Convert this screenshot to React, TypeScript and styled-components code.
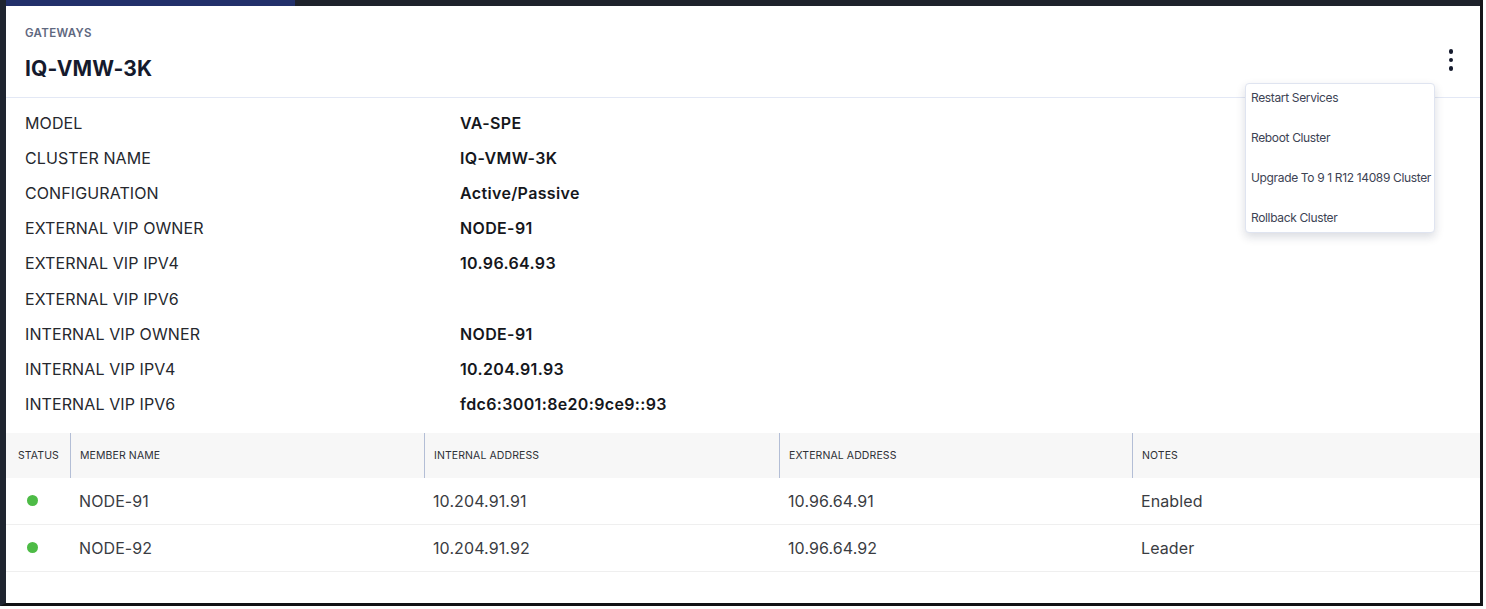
import React from 'react';
import styled, { createGlobalStyle } from 'styled-components';

const GlobalStyle = createGlobalStyle`
  html, body {
    margin: 0;
    padding: 0;
    background: #ffffff;
  }

  body {
    font-family: Inter, "Noto Sans", "Liberation Sans", sans-serif;
    -webkit-font-smoothing: antialiased;
  }
`;

const Frame = styled.div`
  border-bottom: 3px solid #111214;
  border-left: 6px solid #1f2530;
  border-right: 3px solid #17181b;
  box-sizing: border-box;
  display: flex;
  flex-direction: column;
  height: 606px;
  width: 1483px;
`;

const TopBar = styled.div`
  background: #1e222b;
  display: flex;
  flex: none;
  height: 6px;
`;

const TopBarActive = styled.div`
  background: #22306a;
  width: 289px;
`;

const Panel = styled.div`
  background: #fff;
  display: flex;
  flex: 1;
  flex-direction: column;
  position: relative;
`;

const Header = styled.div`
  align-items: flex-start;
  border-bottom: 1px solid #e3e8f5;
  display: flex;
  justify-content: space-between;
  padding: 20px 19px 14px 19px;
`;

const Eyebrow = styled.div`
  color: #5f6880;
  font-size: 11.5px;
  font-weight: 600;
  letter-spacing: 0.3px;
  line-height: 14px;
`;

const Title = styled.h1`
  color: #151a2d;
  font-size: 21px;
  font-weight: 700;
  letter-spacing: 0.2px;
  line-height: 28px;
  margin: 15px 0 0;
`;

const Kebab = styled.button`
  align-items: center;
  background: none;
  border: none;
  cursor: pointer;
  display: flex;
  flex-direction: column;
  gap: 4px;
  margin-top: 23px;
  padding: 0 8px;
`;

const Dot = styled.span`
  background: #151a2d;
  border-radius: 50%;
  display: block;
  height: 4.5px;
  width: 4.5px;
`;

const Menu = styled.ul`
  background: #fff;
  border: 1px solid #dfe4f0;
  border-radius: 4px;
  box-shadow: 0 4px 10px rgba(20, 30, 60, 0.16);
  display: flex;
  flex-direction: column;
  gap: 12px;
  list-style: none;
  margin: 0;
  padding: 0;
  position: absolute;
  right: 45px;
  top: 77px;
  width: 188px;
  z-index: 2;
`;

const MenuItem = styled.li`
  color: #3d4354;
  cursor: pointer;
  font-size: 12px;
  letter-spacing: -0.35px;
  line-height: 14px;
  padding: 7px 5px;
  white-space: nowrap;
`;

const Details = styled.dl`
  display: grid;
  grid-auto-rows: 35.2px;
  grid-template-columns: 435px 1fr;
  margin: 0;
  padding: 7px 19px 11px;
`;

const Label = styled.dt`
  align-self: center;
  color: #26282e;
  font-size: 16px;
  letter-spacing: 0.1px;
`;

const Value = styled.dd`
  align-self: center;
  color: #15171c;
  font-size: 16px;
  font-weight: 600;
  letter-spacing: 0.35px;
  margin: 0;
`;

const cols = '64px 354px 355px 353px 1fr';

const Table = styled.div`
  display: flex;
  flex-direction: column;
`;

const HeadRow = styled.div`
  background: #f7f7f7;
  display: grid;
  grid-template-columns: ${cols};
  height: 45px;
`;

const HeadCell = styled.div<{ $first?: boolean }>`
  align-items: center;
  border-left: ${p => (p.$first ? 'none' : '1px solid #b3bed6')};
  color: #2e3036;
  display: flex;
  font-size: 10.5px;
  letter-spacing: 0.1px;
  padding-left: ${p => (p.$first ? '12px' : '9px')};
`;

const Row = styled.div`
  border-bottom: 1px solid #efefef;
  display: grid;
  grid-template-columns: ${cols};
  height: 46px;
`;

const Cell = styled.div<{ $first?: boolean }>`
  align-items: center;
  color: #3a3c42;
  display: flex;
  font-size: 16px;
  letter-spacing: 0.1px;
  padding-left: ${p => (p.$first ? '21px' : '9px')};
`;

const StatusDot = styled.span<{ $color: string }>`
  background: ${p => p.$color};
  border-radius: 50%;
  display: block;
  height: 11px;
  width: 11px;
`;

const details: [string, string][] = [
  ['MODEL', 'VA-SPE'],
  ['CLUSTER NAME', 'IQ-VMW-3K'],
  ['CONFIGURATION', 'Active/Passive'],
  ['EXTERNAL VIP OWNER', 'NODE-91'],
  ['EXTERNAL VIP IPV4', '10.96.64.93'],
  ['EXTERNAL VIP IPV6', ''],
  ['INTERNAL VIP OWNER', 'NODE-91'],
  ['INTERNAL VIP IPV4', '10.204.91.93'],
  ['INTERNAL VIP IPV6', 'fdc6:3001:8e20:9ce9::93']
];

const members = [
  { name: 'NODE-91', internal: '10.204.91.91', external: '10.96.64.91', notes: 'Enabled' },
  { name: 'NODE-92', internal: '10.204.91.92', external: '10.96.64.92', notes: 'Leader' }
];

const menuItems = [
  'Restart Services',
  'Reboot Cluster',
  'Upgrade To 9 1 R12 14089 Cluster',
  'Rollback Cluster'
];

export default function App() {
  return (
    <>
      <GlobalStyle />
      <Frame>
        <TopBar>
          <TopBarActive />
        </TopBar>
        <Panel>
          <Header>
            <div>
              <Eyebrow>GATEWAYS</Eyebrow>
              <Title>IQ-VMW-3K</Title>
            </div>
            <Kebab aria-label="More actions">
              <Dot />
              <Dot />
              <Dot />
            </Kebab>
          </Header>
          <Menu>
            {menuItems.map(item => (
              <MenuItem key={item}>{item}</MenuItem>
            ))}
          </Menu>
          <Details>
            {details.map(([label, value]) => (
              <React.Fragment key={label}>
                <Label>{label}</Label>
                <Value>{value}</Value>
              </React.Fragment>
            ))}
          </Details>
          <Table>
            <HeadRow>
              <HeadCell $first>STATUS</HeadCell>
              <HeadCell>MEMBER NAME</HeadCell>
              <HeadCell>INTERNAL ADDRESS</HeadCell>
              <HeadCell>EXTERNAL ADDRESS</HeadCell>
              <HeadCell>NOTES</HeadCell>
            </HeadRow>
            {members.map(m => (
              <Row key={m.name}>
                <Cell $first>
                  <StatusDot $color="#4dbb46" />
                </Cell>
                <Cell>{m.name}</Cell>
                <Cell>{m.internal}</Cell>
                <Cell>{m.external}</Cell>
                <Cell>{m.notes}</Cell>
              </Row>
            ))}
          </Table>
        </Panel>
      </Frame>
    </>
  );
}
